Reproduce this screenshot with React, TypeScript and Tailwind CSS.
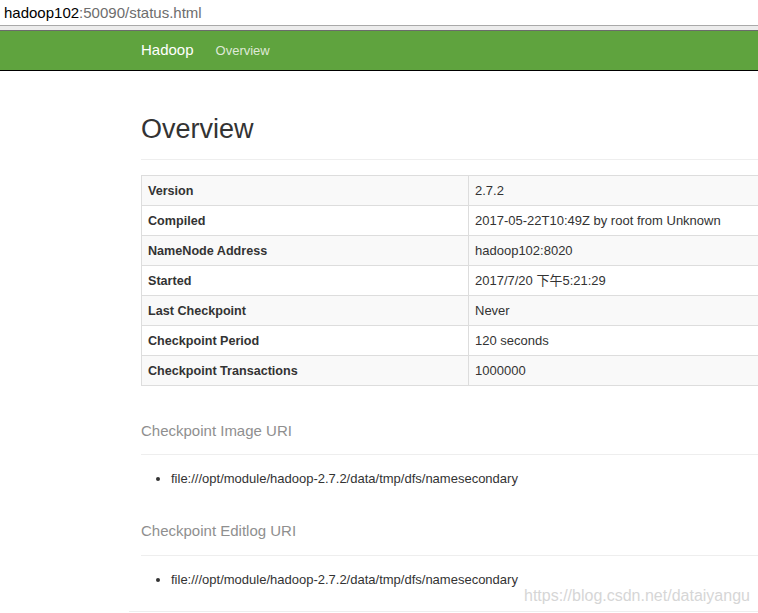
const rows = [
  { label: "Version", value: "2.7.2" },
  { label: "Compiled", value: "2017-05-22T10:49Z by root from Unknown" },
  { label: "NameNode Address", value: "hadoop102:8020" },
  { label: "Started", value: "2017/7/20 下午5:21:29" },
  { label: "Last Checkpoint", value: "Never" },
  { label: "Checkpoint Period", value: "120 seconds" },
  { label: "Checkpoint Transactions", value: "1000000" },
];

const font = "font-['Liberation_Sans','Noto_Sans_CJK_SC',sans-serif]";

function Section({ title, uri, wide }: { title: string; uri: string; wide?: boolean }) {
  return (
    <div>
      <h3 className="h-[20px] text-[15px] leading-[20px] text-[#8f8f8f]">
        {title}
      </h3>
      <div className={`${wide ? "mt-[14px]" : "mt-[13px]"} h-px w-[640px] bg-[#eeeeee]`} />
      <ul className="mt-[14px] list-disc pl-[30px] text-[13px] leading-[20px] text-[#333]">
        <li>{uri}</li>
      </ul>
    </div>
  );
}

export default function App() {
  return (
    <div className={`relative h-[613px] w-[758px] overflow-hidden bg-white ${font}`}>

      {/* Address bar */}
      <div className="h-[25px] pl-[4px] text-[15px] leading-[25px] text-[#6d6d6d]">
        <span className="text-black">hadoop102</span>:50090/status.html
      </div>
      <div className="h-px bg-[#a9a9a9]" />
      <div className="h-[4px] bg-[#ececec]" />
      <div className="h-px bg-[#6b6b6b]" />

      {/* Navbar */}
      <div className="flex h-[40px] items-center border-b border-black bg-[#5fa33e] pl-[141px]">
        <span className="text-[15px] text-white">Hadoop</span>
        <span className="ml-[22px] text-[13px] text-[#dfe9d8]">Overview</span>
      </div>

      {/* Content */}
      <div className="pl-[141px]">

        <h1 className="mt-[42px] text-[27px] leading-[33px] text-[#333]">
          Overview
        </h1>
        <div className="mt-[13px] h-px w-[640px] bg-[#eeeeee]" />

        {/* Table */}
        <div className="mt-[15px] w-[660px] border-l border-t border-[#dddddd] text-[13px] text-[#333]">
          {rows.map((row, i) => (
            <div
              key={row.label}
              className={`flex h-[30px] border-b border-[#dddddd] ${
                i % 2 === 0 ? "bg-[#f9f9f9]" : "bg-white"
              }`}
            >
              <div className="flex w-[327px] items-center border-r border-[#dddddd] pl-[6px] pt-[1px] text-[12.6px] font-bold">
                {row.label}
              </div>
              <div className="flex flex-1 items-center border-r border-[#dddddd] pl-[6px]">
                {row.value}
              </div>
            </div>
          ))}
        </div>

        <div className="mt-[35px]">
          <Section
            title="Checkpoint Image URI"
            uri="file:///opt/module/hadoop-2.7.2/data/tmp/dfs/namesecondary"
          />
        </div>

        <div className="mt-[32px]">
          <Section
            wide
            title="Checkpoint Editlog URI"
            uri="file:///opt/module/hadoop-2.7.2/data/tmp/dfs/namesecondary"
          />
        </div>

      </div>

      {/* Footer rule */}
      <div className="ml-[129px] mt-[21px] h-px w-[660px] bg-[#eeeeee]" />

      {/* Watermark */}
      <div className="absolute left-[524px] top-[586px] text-[16px] leading-[20px] text-[#d6d6d6]">
        https://blog.csdn.net/dataiyangu
      </div>

    </div>
  );
}
